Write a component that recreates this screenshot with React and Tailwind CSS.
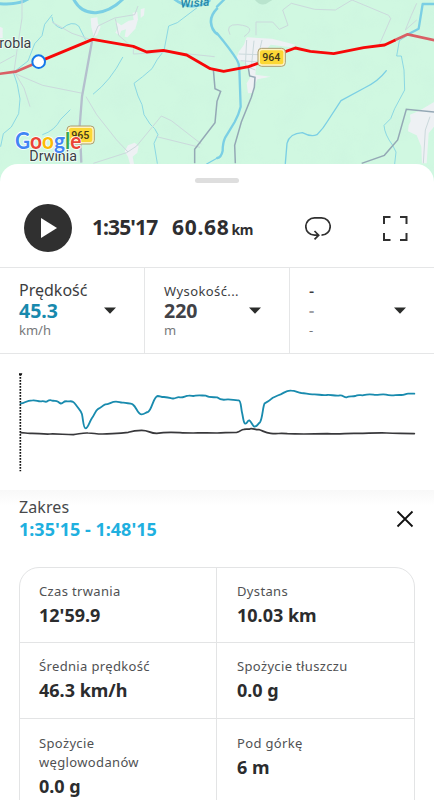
const FONT = "font-['Noto_Sans','Open_Sans',sans-serif]";

function RouteMap() {
  return (
    <svg className="block h-[184px] w-full shrink-0" viewBox="0 0 1302 552" fill="none">
      <defs>
        <filter id="relief" x="0" y="0" width="100%" height="100%">
          <feTurbulence type="fractalNoise" baseFrequency="0.012" numOctaves="3" seed="4" />
          <feColorMatrix values="0 0 0 0 0.55  0 0 0 0 0.8  0 0 0 0 0.72  0.9 0 0 0 -0.34" />
        </filter>
      </defs>
      <rect width="1302" height="552" fill="#d0f8e1" />
      <rect width="1302" height="552" filter="url(#relief)" opacity="0.3" />
      {/* built-up areas */}
      <g fill="#eef1f4">
        <path d="M272 55l20-3 2 20 8 8-10 24-10 8-8-30zM344 62l20 14 22-14 28-4-8 28-24 26-8-2 4-22-14 4-6 14-12-8 8-14zM398 38l14-2 2 24-12 10zM422 28l12-4-2 22-10 8zM384 436l20-8 12 10-4 20-14 12 4 22h-12l-6-22-10-16zM0 80l8 4v30H0z" />
        <path d="M740 112l76 4 70 18-12 8-62-8-26 28-16 20-4 42 46 6-40 8-8 18-2 22-18 2-4-30 12-20-10-38-16-10-18-2 8-24 16-22z" />
        <path d="M1230 344l28-12 44-26v74l-16 20-6 90h-14l-2-50-14-34-26-12 2-18 6-12z" />
      </g>
      <path d="M765 0q20 24 42 6l10-6z" fill="#b9e4ce" />
      {/* rivers */}
      <g stroke="#7bcfe4" strokeLinecap="round" strokeLinejoin="round">
        <path d="M0 11q56 4 84-14M220-4q22 44 68 42 46-4 84-44" strokeWidth="9" />
        <path d="M520-5q24 20 54 24 36-2 54-17M651 26q-20 20-18 42t18 34" strokeWidth="8" />
        <path d="M651 20L675-4M651 100q40 48 60 80q7 12 7 26l4 114q-6 24-18 46l-28 46q-8 16-8 40-4 20-16 22M1302 12h-34l-12 74-30 16" strokeWidth="7" />
        <path d="M856 490l5-60q8-30 46-32 26 14 44 6 20-20 30-38l42-64 70-38q42-20 66-52M620 492l32-18" strokeWidth="4" />
        <path d="M590 24l-58 44-26 10-14 74-20 26-16 28-28 24-26 20 12 38 12 26 6 30 18 28 14 14 10 18-12 26 10 60M156 45l-22 28-8 34-22 24-20 52-44 34 12 36 8 44-4 44-22 40-24 20-8 38M156 52q0 24 30 34 30-26 50-8l20 40M128 404q36-12 54-46l28-28M280 282q52-40 88-110M1226 104l-28 18-8 46h14l8 42 2 60-30 56-12 30-20 20q2 28 26 60l10 20-4 36" strokeWidth="3" opacity=".8" />
      </g>
      {/* minor roads */}
      <g stroke="#cbd9dc" strokeWidth="3">
        <path d="M66 0v54l-14 90-10 70 30 50 18 56M48 222l80 34 120 24M156 66l60 34 60 20M258 290l32 54 60 76 34 36M280 490l100-32 30-20 74-90 30 14 90 70M470 410l130 32M280 112l14-34 50-24 60-10 10-26M0 190l44-24M400 140v22l110-6 134 14M346 56l10 50 30 26" />
        <path d="M768 106V66l50 0 20 22 26-12-16-46 26-20 70 18 62 2 50-30 110 46 6 10-34 78M690 104q-16-32 24-30 60 6 18 36M740 120l-4 78 30 12M716 162l60 2 10-44M722 182l50 4M762 122l-8 80M1250 60l-34 30 18-44 16-36M1290 350l-14 40-6 100" />
      </g>
      {/* secondary roads */}
      <path d="M277 118L246 290l-7 88 5 110" stroke="#b4bfcd" strokeWidth="7" />
      <g stroke="#94a8b5" strokeWidth="4.5">
        <path d="M640 208l5 58 17 8-11 30-6 64-61 80v42M745 204l4 24 16 4-2 30-9 30-30 74-20 70 2 54M1085 490l68-24 40-46 26-92 84 8" />
      </g>
      {/* recorded route */}
      <g strokeLinejoin="round">
        <path d="M-5 222L47 215L117 185" stroke="#d95f65" strokeWidth="8" />
        <path d="M1184 121L1223 103L1306 121" stroke="#d95f65" strokeWidth="8" />
        <path d="M117 185L278 118L400 139L440 156L490 151L560 165L631 206L671 214L746 200L800 180L856 155L886 144L931 154L1001 161L1091 143L1154 135L1186 120" stroke="#f70808" strokeWidth="8.5" />
      </g>
      <circle cx="116" cy="185" r="19" fill="#fff" stroke="#1477ea" strokeWidth="6" />
      {/* road shields */}
      <g fontFamily="Roboto, sans-serif" fontWeight="500" fontSize="32" fill="#42391c" textAnchor="middle">
        <rect x="774" y="145" width="82" height="54" rx="11" fill="#fff3c0" stroke="#aa9d71" strokeWidth="3" />
        <rect x="780" y="151" width="70" height="42" rx="6" fill="#fbd735" />
        <text x="814" y="184">964</text>
        <rect x="201" y="378" width="82" height="54" rx="11" fill="#fff3c0" stroke="#aa9d71" strokeWidth="3" />
        <rect x="207" y="384" width="70" height="42" rx="6" fill="#fbd735" />
        <text x="241" y="416">965</text>
      </g>
      <g fontFamily="Roboto, sans-serif" fill="#3a4044" stroke="#effcf6" strokeWidth="5" paintOrder="stroke">
        <text x="-2" y="143" fontSize="42" textLength="96" lengthAdjust="spacingAndGlyphs">robla</text>
        <text x="88" y="483" fontSize="42" textLength="143" lengthAdjust="spacingAndGlyphs">Drwinia</text>
      </g>
      <text x="542" y="23" fontFamily="Roboto, sans-serif" fontStyle="italic" fontWeight="500" fontSize="35" fill="#2588a8" textLength="87" transform="rotate(-4 542 23)">Wisła</text>
      <text x="45" y="446" fontFamily="Lato, sans-serif" fontWeight="700" fontSize="67" textLength="199" lengthAdjust="spacingAndGlyphs" stroke="#fff" strokeWidth="5" strokeLinejoin="round" paintOrder="stroke">
        <tspan fill="#4285f4">G</tspan><tspan fill="#ea4335">o</tspan><tspan fill="#fbbc05">o</tspan><tspan fill="#4285f4">g</tspan><tspan fill="#34a853">l</tspan><tspan fill="#ea4335">e</tspan>
      </text>
    </svg>
  );
}

function Caret() {
  return (
    <svg className="mt-[15px] h-[7px] w-3 shrink-0" viewBox="0 0 12 7">
      <path d="M0 .5h12L6 6.7z" fill="#2b2c2b" />
    </svg>
  );
}

function Metric({ label, value, unit, labelClass, valueClass, className }) {
  return (
    <div className={`flex h-full justify-between pr-[28px] pl-[19px] ${className}`}>
      <div className="pt-3">
        <div className={`h-5 leading-5 whitespace-nowrap text-[#3c3d3f] ${labelClass}`}>{label}</div>
        <div className={`h-[22px] leading-[21px] font-bold ${valueClass}`}>{value}</div>
        <div className="text-[13px] leading-4 text-[#77787a]">{unit}</div>
      </div>
      <div className="-ml-6 pt-6"><Caret /></div>
    </div>
  );
}

function Chart() {
  return (
    <svg className="block h-[136px] w-full" viewBox="0 -18 1302 408" fill="none" strokeLinejoin="round" strokeLinecap="round">
      <path d="M61 42V334" stroke="#111" strokeWidth="5" strokeDasharray="5 4" strokeLinecap="butt" />
      <path d="M57 40h10l-2 6h-8z" fill="#111" />
      <path d="M62 218C76 218 76 220 90 220C112 219 124 223 150 222C172 221 194 224 220 224C238 222 248 218 264 219C284 219 284 222 308 222C340 220 355 222 385 217C400 212 408 211 425 211C448 211 448 220 470 220C490 217 520 217 540 218C570 220 600 218 651 219C670 219 685 217 710 217C722 216 722 208 732 208C740 206 744 209 752 206C762 205 766 210 778 209C790 213 796 219 812 220C832 222 838 219 862 221C902 223 942 222 982 221C1022 223 1032 220 1062 220C1092 221 1122 218 1160 219C1190 221 1210 219 1243 221" stroke="#38383b" strokeWidth="5" />
      <path d="M62 130C74 131 76 121 98 121C112 120 112 125 124 124C132 122 132 126 140 125C146 121 148 119 154 121C164 124 168 121 174 125C180 131 184 133 190 127C196 121 200 125 208 124C220 123 222 127 228 135C236 147 242 149 246 163C250 182 250 205 257 205C264 205 268 186 276 174C284 164 286 152 294 147C304 144 306 137 316 133C328 133 334 125 348 125C358 125 360 129 370 128C382 131 390 128 398 133C410 140 412 163 425 163C434 163 438 156 444 156C456 149 460 110 473 108C482 108 484 112 492 111C506 112 508 113 516 115C528 118 530 109 540 112C550 114 556 107 566 107C578 106 576 110 586 107C600 105 606 107 618 107C628 113 640 111 651 112C660 119 668 120 676 119C690 116 704 122 716 121C724 122 722 144 727 162C731 182 731 190 736 191C742 192 742 180 748 181C754 184 758 200 764 200C774 198 774 190 780 187C788 174 788 140 794 130C802 126 806 124 816 115C824 111 832 106 842 103C854 98 860 90 874 92C886 92 892 97 904 99C918 99 924 104 940 103C956 102 962 107 980 105C992 103 1006 109 1020 106C1030 105 1032 113 1040 112C1048 107 1056 111 1066 108C1074 103 1080 106 1088 106C1100 103 1106 101 1120 104C1134 107 1144 101 1158 104C1174 109 1188 104 1202 105C1214 106 1216 100 1226 101H1243" stroke="#198bae" strokeWidth="5.5" />
    </svg>
  );
}

function Stat({ label, value, className }) {
  return (
    <div className={className}>
      <div className="text-[13px] leading-[19px] tracking-[0.35px] text-[#505153]">{label}</div>
      <div className="mt-px text-[18px] leading-[26px] font-bold text-[#2b2c2e]">{value}</div>
    </div>
  );
}

export default function App() {
  return (
    <main className={`flex h-[800px] w-full flex-col overflow-hidden bg-white ${FONT}`}>
      <RouteMap />
      <section className="relative -mt-5 flex-1 rounded-t-[18px] bg-white">
        <div className="flex h-[103px] flex-col">
          <div className="mx-auto mt-[14px] h-[5px] w-11 shrink-0 rounded-full bg-[#dedede]" />
          <div className="mt-[21px] flex h-12 items-center pr-[26px] pl-6">
            <button className="flex size-12 items-center justify-center rounded-full bg-[#303030]" aria-label="Odtwórz">
              <svg className="size-5" viewBox="0 0 20 20"><path d="M3 0v20l16-10z" fill="#fff" /></svg>
            </button>
            <span className="ml-5 w-[80px] text-[21px] font-bold tracking-[-0.9px] whitespace-nowrap text-[#2e2e30]">1:35'17</span>
            <span className="flex w-[133px] items-baseline text-[21px] font-bold tracking-[0.7px] text-[#2e2e30]">
              60.68<span className="ml-0.5 text-[14px] tracking-[-0.5px]">km</span>
            </span>
            <svg className="h-6 w-[26px]" viewBox="0 0 26 24" fill="none" stroke="#303030" strokeWidth="1.7">
              <path d="M16.500 19.200a8.700 8.700 0 0 0 0-17.400h-7a8.700 8.700 0 0 0 0 17.400h4M9.500 15l4.200 4.200-4.200 4.200" />
            </svg>
            <svg className="ml-auto size-[26px]" viewBox="0 0 26 26" fill="none" stroke="#303030" strokeWidth="2">
              <path d="M8.500 2H2v7M18 2h6.500v7M2 18v7h6.500M18 25h6.500v-7" />
            </svg>
          </div>
        </div>
        <div className="grid h-[87px] grid-cols-[145px_145px_1fr] border-y-[1.5px] border-[#e5e6e7]">
          <Metric label="Prędkość" value="45.3" unit="km/h" labelClass="text-[16px]" valueClass="text-[19.5px] text-[#1889ad]" className="border-r border-[#e5e6e7]" />
          <Metric label="Wysokość..." value="220" unit="m" labelClass="pt-px text-[13px] tracking-[0.4px]" valueClass="text-[19.5px] text-[#414247]" className="border-r border-[#e5e6e7]" />
          <Metric label="-" value="-" unit="-" labelClass="pt-px text-[16px] font-medium" valueClass="text-[16px] text-[#a0a0a4]" className="" />
        </div>
        <Chart />
        <div className="flex h-[77px] items-start justify-between bg-linear-to-b from-[#f8f8f8] to-white to-20% pr-5 pl-[19px] pt-[7px]">
          <div>
            <div className="text-[16px] leading-5 tracking-[0.1px] text-[#47484a]">Zakres</div>
            <div className="text-[18px] leading-[25px] font-bold text-[#1fb0df]">1:35'15 - 1:48'15</div>
          </div>
          <svg className="mt-[13px] size-[18px]" viewBox="0 0 18 18" fill="none" stroke="#111" strokeWidth="1.800">
            <path d="M1.500 1.500l15 15M16.500 1.500l-15 15" />
          </svg>
        </div>
        <div className="mx-[19px] grid h-[260px] grid-cols-[197px_1fr] grid-rows-[75px_76px_1fr] rounded-t-[20px] border-[1.500px] border-[#e3e4e5]">
          <Stat label="Czas trwania" value="12'59.9" className="border-r border-b border-[#e3e4e5] pt-3.5 pl-[19px]" />
          <Stat label="Dystans" value="10.03 km" className="border-b border-[#e3e4e5] pt-3.5 pl-5" />
          <Stat label="Średnia prędkość" value="46.3 km/h" className="border-r border-b border-[#e3e4e5] pt-3.5 pl-[19px]" />
          <Stat label="Spożycie tłuszczu" value="0.0 g" className="border-b border-[#e3e4e5] pt-3.5 pl-5" />
          <Stat label={<>Spożycie<br />węglowodanów</>} value="0.0 g" className="border-r border-[#e3e4e5] pt-[15px] pl-[19px]" />
          <Stat label="Pod górkę" value="6 m" className="pt-[15px] pl-5" />
        </div>
      </section>
    </main>
  );
}
